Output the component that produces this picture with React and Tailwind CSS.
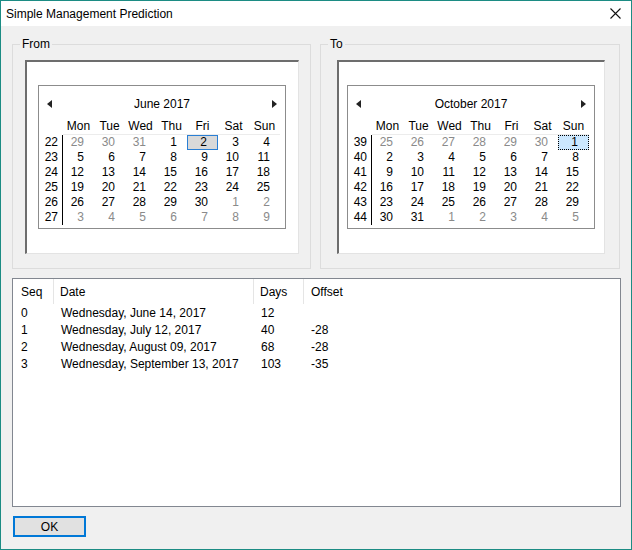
import React from "react";

const F = { fontFamily: '"Liberation Sans","Noto Sans",sans-serif' };

function Cal({ title, weeks, rows, sel, selStyle }) {
  const heads = ["Mon", "Tue", "Wed", "Thu", "Fri", "Sat", "Sun"];
  return (
    <div className="w-[248px] h-[144px] border border-[#8c8c8c] bg-white text-[12px] leading-[15px] text-black">
      <div className="flex items-center justify-between px-[8px] pt-[10px] h-[26px]">
        <svg width="5" height="8"><path d="M5 0L0 4L5 8Z" fill="#222" /></svg>
        <span>{title}</span>
        <svg width="5" height="8"><path d="M0 0L5 4L0 8Z" fill="#222" /></svg>
      </div>
      <div className="flex pt-[7px]">
        <div className="w-[24px]" />
        <div className="flex border-b border-[#ececec] w-[217px]">
          {heads.map((h) => (
            <div key={h} className="w-[31px] text-center h-[15px]">{h}</div>
          ))}
        </div>
      </div>
      <div className="flex">
        <div className="w-[24px] flex flex-col items-end">
          <div className="border-r border-black pr-[4px] w-[22px] text-right">
            {weeks.map((w) => (
              <div key={w} className="h-[15px]">{w}</div>
            ))}
          </div>
        </div>
        <div className="w-[217px]">
          {rows.map((r, i) => (
            <div key={i} className="flex">
              {r.map(([d, g], j) => {
                const isSel = sel && sel[0] === i && sel[1] === j;
                return (
                  <div
                    key={j}
                    className={
                      "w-[31px] h-[15px] text-right pr-[10px] " +
                      (g ? "text-[#8a8a8a] " : "") +
                      (isSel ? selStyle : "")
                    }
                  >
                    {d}
                  </div>
                );
              })}
            </div>
          ))}
        </div>
      </div>
    </div>
  );
}

const mk = (arr, grayFn) => {
  const out = [];
  for (let i = 0; i < 6; i++) out.push(arr.slice(i * 7, i * 7 + 7).map((d, j) => [d, grayFn(i * 7 + j)]));
  return out;
};

const june = [29, 30, 31, ...Array.from({ length: 30 }, (_, i) => i + 1), 1, 2, 3, 4, 5, 6, 7, 8, 9];
const oct = [25, 26, 27, 28, 29, 30, ...Array.from({ length: 31 }, (_, i) => i + 1), 1, 2, 3, 4, 5];

export default function App() {
  const rows = [
    ["0", "Wednesday, June 14, 2017", "12", ""],
    ["1", "Wednesday, July 12, 2017", "40", "-28"],
    ["2", "Wednesday, August 09, 2017", "68", "-28"],
    ["3", "Wednesday, September 13, 2017", "103", "-35"],
  ];
  return (
    <div style={F} className="w-[632px] h-[550px] border border-[#1c8c84] bg-[#f0f0f0] text-[12px] text-black flex flex-col">
      <div className="h-[25px] bg-white flex items-center justify-between pl-[5px] pr-[10px] shrink-0">
        <span className="text-[12px]">Simple Management Prediction</span>
        <svg width="11" height="11"><path d="M0.5 0.5L10.5 10.5M10.5 0.5L0.5 10.5" stroke="#111" strokeWidth="1.1" /></svg>
      </div>
      <div className="flex gap-[9px] pl-[11px] pt-[18px]">
        <div className="relative w-[299px] h-[225px] border border-[#dcdcdc] pt-[15px] pl-[12px]">
          <span className="absolute left-[7px] top-[-9px] px-[2px] bg-[#f0f0f0] leading-[16px]">From</span>
          <div className="w-[274px] h-[194px] bg-white border-t-2 border-l-2 border-t-[#6d6d6d] border-l-[#6d6d6d] border-r border-b border-r-[#e3e3e3] border-b-[#e3e3e3] pt-[23px] pl-[11px]">
            <Cal
              title="June 2017"
              weeks={[22, 23, 24, 25, 26, 27]}
              rows={mk(june, (k) => k < 3 || k > 32)}
              sel={[0, 4]}
              selStyle="bg-[#d9d9d9] border border-[#2a7fd4] leading-[13px]"
            />
          </div>
        </div>
        <div className="relative w-[300px] h-[225px] border border-[#dcdcdc] pt-[15px] pl-[16px]">
          <span className="absolute left-[7px] top-[-9px] px-[2px] bg-[#f0f0f0] leading-[16px]">To</span>
          <div className="w-[268px] h-[194px] bg-white border-t-2 border-l-2 border-t-[#6d6d6d] border-l-[#6d6d6d] border-r border-b border-r-[#e3e3e3] border-b-[#e3e3e3] pt-[23px] pl-[8px]">
            <Cal
              title="October 2017"
              weeks={[39, 40, 41, 42, 43, 44]}
              rows={mk(oct, (k) => k < 6 || k > 36)}
              sel={[0, 6]}
              selStyle="bg-[#cce8ff] border border-dotted border-black leading-[13px]"
            />
          </div>
        </div>
      </div>
      <div className="mt-[9px] ml-[11px] w-[609px] h-[229px] bg-white border border-[#828790]">
        <div className="flex h-[25px] items-center">
          <div className="w-[41px] pl-[8px] h-full flex items-center border-r border-[#e5e5e5]">Seq</div>
          <div className="w-[200px] pl-[6px] h-full flex items-center border-r border-[#e5e5e5]">Date</div>
          <div className="w-[50px] pl-[6px] h-full flex items-center border-r border-[#e5e5e5]">Days</div>
          <div className="pl-[7px]">Offset</div>
        </div>
        {rows.map((r) => (
          <div key={r[0]} className="flex h-[17px] items-center">
            <div className="w-[41px] pl-[8px]">{r[0]}</div>
            <div className="w-[200px] pl-[7px]">{r[1]}</div>
            <div className="w-[50px] pl-[7px]">{r[2]}</div>
            <div className="pl-[7px]">{r[3]}</div>
          </div>
        ))}
      </div>
      <div className="ml-[12px] mt-[9px] w-[73px] h-[21px] border-2 border-[#0078d7] bg-[#e1e1e1] flex items-center justify-center text-[12px]">OK</div>
    </div>
  );
}
